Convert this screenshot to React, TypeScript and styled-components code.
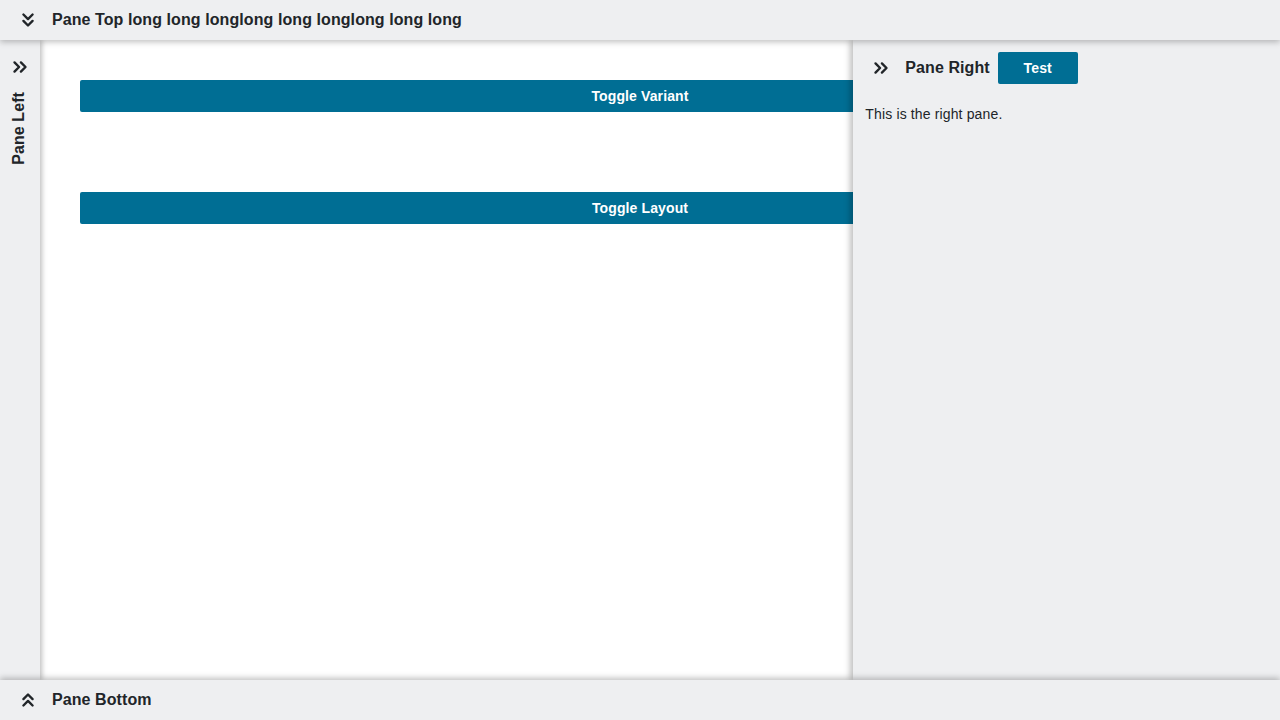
import React from "react";
import styled, { createGlobalStyle } from "styled-components";
import { ChevronsDown, ChevronsRight, ChevronsUp } from "lucide-react";

const Global = createGlobalStyle`
  html, body { margin: 0; padding: 0; height: 100%; }
  body { font-family: "Liberation Sans", Arial, sans-serif; color: #212529; background: #fff; }
  #root { height: 100%; }
  * { box-sizing: border-box; }
`;

const Shell = styled.div`
  display: flex;
  flex-direction: column;
  height: 100vh;
  overflow: hidden;
`;

const HBar = styled.div<{ $edge: "top" | "bottom" }>`
  position: relative;
  z-index: 3;
  height: 40px;
  flex: 0 0 40px;
  display: flex;
  align-items: center;
  gap: 13px;
  padding-left: 17px;
  background: #eeeff1;
  box-shadow: ${(p) => (p.$edge === "top" ? "0 2px 6px rgba(0,0,0,0.25)" : "0 -2px 6px rgba(0,0,0,0.25)")};
`;

const Title = styled.span`
  font-size: 16px;
  font-weight: 700;
  letter-spacing: 0.08px;
  white-space: nowrap;
`;

const IconBtn = styled.span`
  display: inline-flex;
  align-items: center;
  justify-content: center;
  color: #212529;
  width: 22px;
  height: 22px;
  flex: 0 0 22px;
`;

const Middle = styled.div`
  position: relative;
  flex: 1;
  display: flex;
  min-height: 0;
`;

const LeftBar = styled.div`
  position: relative;
  z-index: 2;
  width: 40px;
  flex: 0 0 40px;
  background: #eeeff1;
  box-shadow: 2px 0 5px rgba(0,0,0,0.25);
  display: flex;
  flex-direction: column;
  align-items: center;
  padding-top: 16px;
  gap: 14px;
`;

const Vertical = styled.span`
  writing-mode: vertical-rl;
  transform: rotate(180deg);
  font-size: 16px;
  font-weight: 700;
  letter-spacing: 0.08px;
  white-space: nowrap;
  margin-left: -2px;
`;

const Main = styled.div`
  flex: 1;
  padding: 40px 80px 40px 40px;
  display: flex;
  flex-direction: column;
  gap: 80px;
`;

const Button = styled.button<{ $w?: string }>`
  height: 32px;
  width: ${(p) => p.$w ?? "100%"};
  flex: 0 0 auto;
  border: none;
  border-radius: 2px;
  background: #006e94;
  color: #fff;
  font-family: "Liberation Sans", Arial, sans-serif;
  font-size: 14px;
  font-weight: 700;
  letter-spacing: 0.12px;
  cursor: pointer;
`;

const RightPane = styled.div`
  position: absolute;
  z-index: 2;
  top: 0;
  right: 0;
  bottom: 0;
  width: 33.3333%;
  background: #eeeff1;
  box-shadow: -3px 0 6px rgba(0,0,0,0.25);
  padding: 12px;
  display: flex;
  flex-direction: column;
  gap: 22px;
`;

const RightHeader = styled.div`
  display: flex;
  align-items: center;
  padding-left: 5px;
`;

const RightTitle = styled(Title)`
  margin-left: 13px;
  margin-right: 8px;
`;

const Body = styled.p`
  margin: 0;
  font-size: 14px;
  letter-spacing: 0.14px;
`;

const iconProps = { size: 22, strokeWidth: 2.6 };

export default function App() {
  return (
    <Shell>
      <Global />
      <HBar $edge="top">
        <IconBtn><ChevronsDown {...iconProps} /></IconBtn>
        <Title>Pane Top long long longlong long longlong long long</Title>
      </HBar>
      <Middle>
        <LeftBar>
          <IconBtn><ChevronsRight {...iconProps} /></IconBtn>
          <Vertical>Pane Left</Vertical>
        </LeftBar>
        <Main>
          <Button>Toggle Variant</Button>
          <Button>Toggle Layout</Button>
        </Main>
        <RightPane>
          <RightHeader>
            <IconBtn><ChevronsRight {...iconProps} /></IconBtn>
            <RightTitle>Pane Right</RightTitle>
            <Button $w="80px">Test</Button>
          </RightHeader>
          <Body>This is the right pane.</Body>
        </RightPane>
      </Middle>
      <HBar $edge="bottom">
        <IconBtn><ChevronsUp {...iconProps} /></IconBtn>
        <Title>Pane Bottom</Title>
      </HBar>
    </Shell>
  );
}
